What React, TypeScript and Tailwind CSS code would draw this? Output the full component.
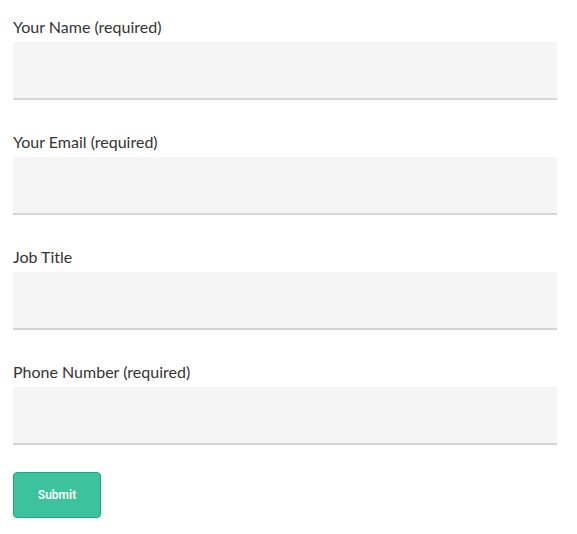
const FIELDS = [
  { id: 'name', label: 'Your Name (required)', type: 'text' },
  { id: 'email', label: 'Your Email (required)', type: 'email' },
  { id: 'job', label: 'Job Title', type: 'text' },
  { id: 'phone', label: 'Phone Number (required)', type: 'tel' },
]

export default function App() {
  return (
    <div className="min-h-screen bg-white pl-[13px] pr-5 pt-4" style={{ fontFamily: 'Lato, "Noto Sans", sans-serif' }}>
      <form className="flex flex-col gap-[31px]" onSubmit={e => e.preventDefault()}>
        {FIELDS.map(f => (
          <div key={f.id} className="flex flex-col">
            <label htmlFor={f.id} className="text-[16px] leading-[22px] text-[#333333] mb-1">
              {f.label}
            </label>
            <input
              id={f.id}
              type={f.type}
              className="h-[58px] w-full bg-[#f5f5f5] border-b-2 border-[#d5d5d5] px-3 text-[15px] text-[#333] focus:outline-none"
            />
          </div>
        ))}
      </form>
      <button
        type="submit"
        className="mt-[27px] w-[88px] h-[46px] rounded-[4px] bg-[#3cc39b] border border-[#1fa87f] text-white text-[12px] font-semibold"
        style={{ fontFamily: 'Roboto, "Liberation Sans", sans-serif' }}
      >
        Submit
      </button>
    </div>
  )
}
